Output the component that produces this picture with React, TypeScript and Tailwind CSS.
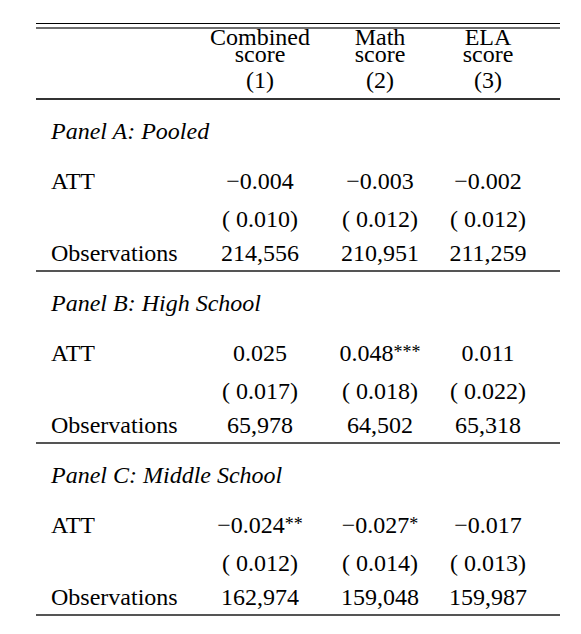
type Row = { label: string; cells: React.ReactNode[] };

type Panel = {
  title: string;
  att: React.ReactNode[];
  se: string[];
  obs: string[];
};

const Stars = ({ n }: { n: number }) => (
  <span className="relative -top-[3px] text-[18px] leading-none">{"*".repeat(n)}</span>
);

const panels: Panel[] = [
  {
    title: "Panel A: Pooled",
    att: ["−0.004", "−0.003", "−0.002"],
    se: ["( 0.010)", "( 0.012)", "( 0.012)"],
    obs: ["214,556", "210,951", "211,259"],
  },
  {
    title: "Panel B: High School",
    att: [
      "0.025",
      <>
        0.048
        <Stars n={3} />
      </>,
      "0.011",
    ],
    se: ["( 0.017)", "( 0.018)", "( 0.022)"],
    obs: ["65,978", "64,502", "65,318"],
  },
  {
    title: "Panel C: Middle School",
    att: [
      <>
        −0.024
        <Stars n={2} />
      </>,
      <>
        −0.027
        <Stars n={1} />
      </>,
      "−0.017",
    ],
    se: ["( 0.012)", "( 0.014)", "( 0.013)"],
    obs: ["162,974", "159,048", "159,987"],
  },
];

const cols = "grid grid-cols-[164px_120px_120px_96px_1fr]";

function DataRow({ label, cells, className }: Row & { className?: string }) {
  return (
    <div className={`${cols} leading-[24px] ${className ?? ""}`}>
      <div className="pl-[15px]">{label}</div>
      {cells.map((c, i) => (
        <div key={i} className="text-center whitespace-nowrap">
          {c}
        </div>
      ))}
    </div>
  );
}

export default function App() {
  return (
    <div className="min-h-[634px] w-[581px] bg-white pt-[23px] font-[family-name:'Liberation_Serif','Times_New_Roman',serif] text-[24px] text-black">
      <div className="ml-[36px] w-[524px]">
        {/* double top rule */}
        <div className="h-px bg-black" />
        <div className="mt-[3px] h-[2px] bg-[#6e6e6e]" />

        {/* header */}
        <div className={`${cols} border-b-2 border-[#333] pb-[6px]`}>
          <div />
          {[
            ["Combined", "(1)"],
            ["Math", "(2)"],
            ["ELA", "(3)"],
          ].map(([name, num]) => (
            <div key={num} className="flex flex-col items-center">
              <span className="leading-[17px]">{name}</span>
              <span className="leading-[17px]">score</span>
              <span className="mt-[5px] leading-[24px]">{num}</span>
            </div>
          ))}
        </div>

        {panels.map((p) => (
          <div key={p.title} className="border-b-2 border-[#555] pt-[19px] pb-[5px]">
            <div className="pl-[15px] italic leading-[24px]">{p.title}</div>
            <DataRow className="mt-[26px]" label="ATT" cells={p.att} />
            <DataRow className="mt-[14px]" label="" cells={p.se} />
            <DataRow className="mt-[10px]" label="Observations" cells={p.obs} />
          </div>
        ))}
      </div>
    </div>
  );
}
